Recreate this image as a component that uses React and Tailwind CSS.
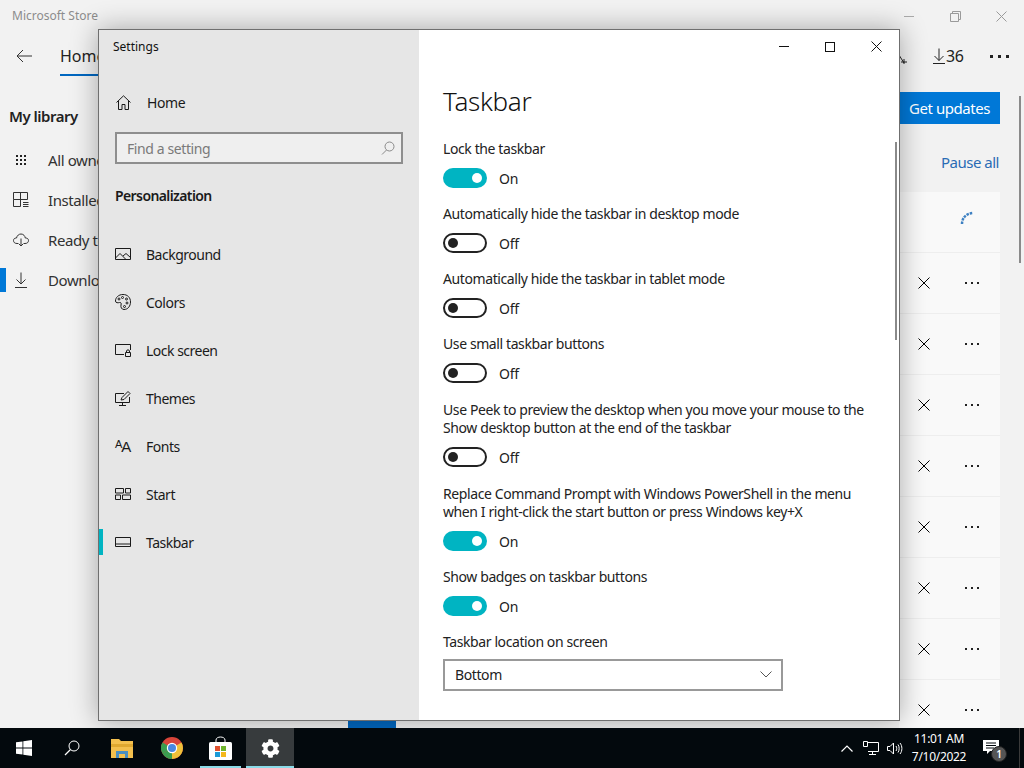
import React from "react";
import { FaCog } from "react-icons/fa";

const S = ({ w = 16, h = 16, vb, children, className = "" }) => (
  <svg
    width={w}
    height={h}
    viewBox={vb || `0 0 ${w} ${h}`}
    fill="none"
    stroke="currentColor"
    strokeWidth="1"
    className={`shrink-0 ${className}`}
  >
    {children}
  </svg>
);

const XIcon = ({ size = 12 }) => (
  <S w={size} h={size}>
    <path d={`M0.5 0.5L${size - 0.5} ${size - 0.5}M${size - 0.5} 0.5L0.5 ${size - 0.5}`} />
  </S>
);

const Dots = () => (
  <div className="flex gap-1">
    <span className="w-[2px] h-[2px] bg-[#222]"></span>
    <span className="w-[2px] h-[2px] bg-[#222]"></span>
    <span className="w-[2px] h-[2px] bg-[#222]"></span>
  </div>
);

const navIcons = {
  Background: (
    <S w={16} h={13}>
      <path d="M0.5 0.5H15.5V11.5H0.5ZM0.5 10L5 5.5L11 11.5M8 8L11 5.5L15.5 9.5" />
    </S>
  ),
  Colors: (
    <S w={16} h={16}>
      <path d="M8 0.5C3.5 0.5 0.5 3.5 0.5 7C0.5 9 3 9 4.5 8.5C6 8 6.5 9.5 6 11C5.5 13 6.5 15.5 9 15.5C13 15.5 15.5 12 15.5 8C15.5 3.5 12.5 0.5 8 0.5Z" />
      <circle cx="4" cy="5" r="1" />
      <circle cx="7.5" cy="3.5" r="1" />
      <circle cx="11.5" cy="5" r="1" />
      <circle cx="12" cy="9" r="1" />
      <circle cx="9.5" cy="12.5" r="1" />
    </S>
  ),
  "Lock screen": (
    <S w={16} h={13}>
      <path d="M9 10.5H0.5V0.5H15.5V6" />
      <path d="M10.5 8.5H15.5V12.5H10.5ZM11.5 8.5V7C11.5 5.5 14.5 5.5 14.5 7V8.5" />
    </S>
  ),
  Themes: (
    <S w={16} h={15}>
      <path d="M9 2.5H0.5V11.5H14.5V6M7.5 11.5V14M4 14.5H11" />
      <path d="M6 9L7 6.5L13 0.5L15 2.5L9 8.5Z" />
    </S>
  ),
  Fonts: (
    <span className="w-4 text-[15px] leading-none tracking-[-1px] font-['Liberation_Sans',sans-serif]">
      <span className="text-[11px] align-[4px]">A</span>A
    </span>
  ),
  Start: (
    <S w={16} h={12}>
      <path d="M0.5 0.5H8.5V5H0.5ZM10.5 0.5H15.5V5H10.5ZM0.5 7H5.5V11.5H0.5ZM7.5 7H15.5V11.5H7.5Z" />
    </S>
  ),
  Taskbar: (
    <S w={16} h={10}>
      <path d="M0.5 0.5H15.5V9.5H0.5ZM0.5 7H15.5" />
    </S>
  ),
};

const navItems = ["Background", "Colors", "Lock screen", "Themes", "Fonts", "Start", "Taskbar"];

const settings = [
  { label: ["Lock the taskbar"], on: true },
  { label: ["Automatically hide the taskbar in desktop mode"], on: false },
  { label: ["Automatically hide the taskbar in tablet mode"], on: false },
  { label: ["Use small taskbar buttons"], on: false },
  {
    label: [
      "Use Peek to preview the desktop when you move your mouse to the",
      "Show desktop button at the end of the taskbar",
    ],
    on: false,
    extra: true,
  },
  {
    label: [
      "Replace Command Prompt with Windows PowerShell in the menu",
      "when I right-click the start button or press Windows key+X",
    ],
    on: true,
    extra: true,
  },
  { label: ["Show badges on taskbar buttons"], on: true },
];

const Toggle = ({ on }) => (
  <div className="flex items-center mt-[10px] h-5">
    {on ? (
      <div className="w-11 h-5 rounded-full bg-[#00b4c2] flex items-center justify-end pr-[5px]">
        <span className="w-[10px] h-[10px] rounded-full bg-white"></span>
      </div>
    ) : (
      <div className="w-11 h-5 rounded-full border-2 border-[#222] flex items-center pl-[3px]">
        <span className="w-[10px] h-[10px] rounded-full bg-[#222]"></span>
      </div>
    )}
    <span className="ml-3 text-[14px] tracking-[-0.3px] text-[#222]">{on ? "On" : "Off"}</span>
  </div>
);

const SettingsWindow = () => (
  <div className="absolute left-[98px] top-[29px] w-[802px] h-[692px] border border-[#6f6f6f] flex shadow-[0_0_26px_rgba(0,0,0,0.32)] tracking-[-0.4px]">
    <div className="w-[320px] bg-[#e6e6e6] flex flex-col relative">
      <div className="pl-[14px] pt-[9px] text-[12px] leading-4 tracking-normal text-[#111]">Settings</div>
      <div className="flex items-center pl-[17px] mt-[37px] h-5 text-[#1a1a1a]">
        <S w={15} h={15}>
          <path d="M0.5 7.5L7.5 0.8L14.5 7.5M2.5 6V14.5H6V9.5H9V14.5H12.5V6" />
        </S>
        <span className="ml-4 text-[14px]">Home</span>
      </div>
      <div className="mx-4 mt-[20px] h-[32px] border-2 border-[#8e8e8e] bg-[#efefef] flex items-center justify-between pl-[10px] pr-[6px]">
        <span className="text-[14px] text-[#7a7a7a]">Find a setting</span>
        <S w={14} h={14} className="text-[#8a8a8a]">
          <circle cx="8.5" cy="5.5" r="4.5" />
          <path d="M5.5 9L1 13.5" />
        </S>
      </div>
      <div className="pl-4 mt-[21px] h-5 flex items-center text-[14px] tracking-[-0.6px] font-semibold text-[#1a1a1a]">
        Personalization
      </div>
      <div className="mt-[25px] flex flex-col">
        {navItems.map((item) => (
          <div key={item} className="h-12 flex items-center relative text-[#1a1a1a]">
            {item === "Taskbar" && (
              <span className="absolute left-0 top-[11px] w-1 h-[26px] bg-[#00b4c2]"></span>
            )}
            <div className="w-4 ml-4 flex justify-center">{navIcons[item]}</div>
            <span className="ml-[15px] text-[14px] tracking-[-0.5px]">{item}</span>
          </div>
        ))}
      </div>
    </div>

    <div className="flex-1 bg-white relative pl-6 overflow-hidden">
      <div className="absolute right-0 top-0 flex items-center h-[33px] text-[#111]">
        <div className="w-[46px] flex justify-center">
          <span className="w-[10px] h-px bg-[#111]"></span>
        </div>
        <div className="w-[46px] flex justify-center">
          <span className="w-[10px] h-[10px] border border-[#111]"></span>
        </div>
        <div className="w-[46px] flex justify-center">
          <XIcon size={11} />
        </div>
      </div>
      <div className="absolute right-[2px] top-[112px] w-[2px] h-[198px] bg-[#8a8a8a]"></div>

      <h1 className="mt-[51px] text-[26px] leading-[40px] font-light tracking-[-0.3px] text-[#111]">Taskbar</h1>
      <div className="mt-[19px] flex flex-col gap-[17px]">
        {settings.map((s) => (
          <div key={s.label[0]} className={s.extra ? "mt-px" : ""}>
            {s.label.map((l) => (
              <div key={l} className="text-[14px] leading-[18px] text-[#222]">
                {l}
              </div>
            ))}
            <Toggle on={s.on} />
          </div>
        ))}
        <div>
          <div className="text-[14px] leading-[18px] text-[#222]">Taskbar location on screen</div>
          <div className="mt-2 w-[340px] h-8 pb-px border-2 border-[#999] flex items-center justify-between pl-[10px] pr-[9px] text-[14px] text-[#222]">
            Bottom
            <S w={12} h={7} className="text-[#555]">
              <path d="M0.5 0.5L6 6L11.5 0.5" />
            </S>
          </div>
        </div>
      </div>
    </div>
  </div>
);

const storeItems = [
  {
    label: "All owned",
    icon: (
      <div className="grid grid-cols-3 gap-[2px]">
        {[...Array(9)].map((_, i) => (
          <span key={i} className="w-[2px] h-[2px] bg-[#222]"></span>
        ))}
      </div>
    ),
  },
  {
    label: "Installed",
    icon: (
      <S w={16} h={16}>
        <path d="M0.5 0.5H14.5V7.5H0.5ZM7.5 0.5V14.5H0.5V7.5M10 10.5H15.5M10 12.5H15.5M10 14.5H15.5" />
      </S>
    ),
  },
  {
    label: "Ready to",
    icon: (
      <S w={16} h={14}>
        <path d="M5 10.5H4C1.5 10.5 0.5 9 0.5 7.5C0.5 6 1.5 5 3.5 5C4 2.5 6 1 8 1C10.5 1 12 3 12.3 5C14.5 5 15.5 6 15.5 7.5C15.5 9 14.5 10.5 12 10.5H11M8 5.5V13M5.5 10.5L8 13L10.5 10.5" />
      </S>
    ),
  },
  {
    label: "Downloads",
    active: true,
    icon: (
      <S w={12} h={16}>
        <path d="M6 0.5V12M1.5 7.5L6 12L10.5 7.5M0 15.5H12" />
      </S>
    ),
  },
];

const StoreBack = () => (
  <div className="h-[728px] bg-[#f2f2f2] flex justify-between overflow-hidden">
    <div className="w-[200px] flex flex-col">
      <div className="pl-3 pt-2 h-[36px] text-[12px] leading-4 text-[#8c8c8c]">Microsoft Store</div>
      <div className="h-[40px] flex items-center pl-4">
        <S w={16} h={14} className="text-[#333]">
          <path d="M16 7H1M7 1L1 7L7 13" />
        </S>
        <div className="ml-7 relative h-[40px] flex items-center text-[16px] text-[#222]">
          Home
          <span className="absolute left-0 bottom-0 w-full h-[2px] bg-[#0067c0]"></span>
        </div>
      </div>
      <div className="pl-[9px] mt-[30px] text-[15px] leading-5 tracking-[-0.5px] font-semibold text-[#222]">My library</div>
      <div className="mt-[14px] flex flex-col">
        {storeItems.map((it) => (
          <div key={it.label} className="h-10 flex items-center relative text-[15px] tracking-[-0.4px] text-[#333]">
            {it.active && <span className="absolute left-0 top-2 w-[6px] h-6 bg-[#0078d7]"></span>}
            <div className="ml-[13px] w-4 flex justify-center">{it.icon}</div>
            <span className="ml-[19px]">{it.label}</span>
          </div>
        ))}
      </div>
    </div>

    <div className="w-[125px] flex flex-col relative">
      <div className="h-[36px] shrink-0 pb-1 flex items-center text-[#9a9a9a]">
        <span className="ml-[5px] w-[10px] h-px bg-[#aaa]"></span>
        <S w={11} h={11} className="ml-[36px]">
          <path d="M0.5 2.5H8.5V10.5H0.5ZM2.5 2.5V0.5H10.5V8.5H8.5" />
        </S>
        <div className="ml-[35px]">
          <XIcon size={11} />
        </div>
      </div>
      <div className="h-[40px] shrink-0 flex items-center text-[#222]">
        <S w={8} h={16}>
          <path d="M0 7L5 15M2 14H8M5 11V16" />
        </S>
        <S w={12} h={16} className="ml-[26px]">
          <path d="M6 0.5V12.5M1.5 8L6 12.5L10.5 8M0 15.5H12" />
        </S>
        <span className="ml-[1px] text-[16px] tracking-[-0.5px]">36</span>
        <div className="ml-[27px] flex gap-[5px]">
          <span className="w-[3px] h-[3px] bg-[#222]"></span>
          <span className="w-[3px] h-[3px] bg-[#222]"></span>
          <span className="w-[3px] h-[3px] bg-[#222]"></span>
        </div>
      </div>
      <div className="mt-4 w-[101px] h-8 shrink-0 bg-[#0078d7] flex items-center justify-center text-[15px] tracking-[-0.45px] text-white">
        Get updates
      </div>
      <div className="w-[100px] mt-[28px] shrink-0 text-right text-[15px] leading-5 tracking-[-0.5px] text-[#2a6cb5]">Pause all</div>
      <div className="w-[101px] mt-[20px] h-[60px] shrink-0 bg-[#f9f9f9] flex items-start justify-end pt-[19px] pr-[26px]">
        <S w={14} h={14} className="text-[#3d80c2]">
          <path d="M2 13C2 7 6 2.5 13 2" strokeWidth="2.5" strokeDasharray="2.5 1" />
        </S>
      </div>
      {[0, 1, 2, 3, 4, 5, 6, 7].map((i) => (
        <div
          key={i}
          className="w-[101px] h-[61px] shrink-0 bg-[#f9f9f9] border-t border-[#eeeeee] flex items-center justify-end pr-[21px] gap-[35px]"
        >
          <XIcon size={12} />
          <Dots />
        </div>
      ))}
      <div className="absolute right-[3px] top-[96px] w-[2px] h-[167px] bg-[#8a8a8a]"></div>
    </div>
  </div>
);

const Taskbar = () => (
  <div className="h-10 bg-[#03090d] flex items-center relative text-white">
    <div className="w-12 flex justify-center">
      <svg width="16" height="16" viewBox="0 0 16 16" fill="#fff">
        <path d="M0 2.3L6.5 1.4V7.6H0ZM7.3 1.3L16 0V7.6H7.3ZM0 8.4H6.5V14.6L0 13.7ZM7.3 8.4H16V16L7.3 14.7Z" />
      </svg>
    </div>
    <div className="w-12 flex justify-center">
      <S w={16} h={16} className="text-white">
        <circle cx="10" cy="6" r="5" />
        <path d="M6.5 9.5L1 15" strokeWidth="1.3" />
      </S>
    </div>
    <div className="w-[52px] flex justify-center">
      <svg width="22" height="19" viewBox="0 0 22 19">
        <path d="M0 0H8L10 2H22V19H0Z" fill="#f4c04e" />
        <path d="M0 5H22V8H0Z" fill="#e0a830" />
        <path d="M5 19V12H17V19Z" fill="#4a8fc2" />
        <path d="M8 19V15H14V19Z" fill="#f4c04e" />
      </svg>
    </div>
    <div className="w-12 flex justify-center">
      <svg width="22" height="22" viewBox="0 0 22 22">
        <circle cx="11" cy="11" r="11" fill="#d9453a" />
        <path d="M11 11L1.5 16.5A11 11 0 0 0 11 22Z" fill="#3a9d50" />
        <path d="M11 11L1.5 16.5A11 11 0 0 1 1.5 5.5Z" fill="#3a9d50" />
        <path d="M11 11L11 22A11 11 0 0 0 20.5 5.5Z" fill="#efc13a" />
        <circle cx="11" cy="11" r="5.2" fill="#fff" />
        <circle cx="11" cy="11" r="4" fill="#4a88e0" />
      </svg>
    </div>
    <div className="w-[50px] h-full flex items-center pl-[13px] relative">
      <svg width="23" height="24" viewBox="0 0 23 24">
        <path d="M7 7V4C7 0 16 0 16 4V7" fill="none" stroke="#fff" strokeWidth="1" />
        <rect x="0" y="6" width="23" height="18" rx="1.5" fill="#fff" />
        <rect x="6" y="10" width="5" height="5" fill="#e0512f" />
        <rect x="12" y="10" width="5" height="5" fill="#6fb52c" />
        <rect x="6" y="16" width="5" height="5" fill="#1d9bd8" />
        <rect x="12" y="16" width="5" height="5" fill="#f4b81c" />
      </svg>
      <span className="absolute left-[4px] w-[41px] bottom-0 h-[2px] bg-[#8adbe8]"></span>
    </div>
    <div className="w-[48px] h-full bg-[#373b3d] flex justify-center items-center relative">
      <FaCog size={19} color="#fff" />
      <span className="absolute left-0 right-0 bottom-0 h-[2px] bg-[#8adbe8]"></span>
    </div>

    <div className="ml-auto flex items-center">
      <S w={12} h={7} className="text-white">
        <path d="M0.5 6.5L6 1L11.5 6.5" strokeWidth="1.2" />
      </S>
      <S w={16} h={14} className="ml-[10px] text-white">
        <path d="M5 1.5H15.5V10.5H5M9.5 10.5V13M6 13.5H13M0.5 0.5H4.5V5.5H0.5Z" />
      </S>
      <S w={16} h={13} className="ml-2 text-white">
        <path d="M0.5 4.5H3L6.5 1V12L3 8.5H0.5ZM9 4C10 5.5 10 7.5 9 9M11 2.5C12.5 4.5 12.5 8.5 11 10.5M13 1C15.5 4 15.5 9 13 12" />
      </S>
      <div className="ml-[10px] w-[52px] flex flex-col items-center text-[12px] leading-[18px] tracking-[-0.3px]">
        <span>11:01 AM</span>
        <span>7/10/2022</span>
      </div>
      <div className="ml-[18px] relative w-4 h-4">
        <svg width="16" height="14" viewBox="0 0 16 14" fill="#fff">
          <path d="M0 0H16V11H7L4 14V11H0Z" />
          <path d="M3 3H13M3 5.5H13M3 8H11" stroke="#03090d" strokeWidth="1" />
        </svg>
        <span className="absolute left-[8px] top-[6px] w-4 h-4 rounded-full bg-[#555] border border-[#222] flex items-center justify-center text-[10px] leading-none font-semibold">
          1
        </span>
      </div>
      <span className="ml-5 mr-1 w-px h-10 bg-[#3a3a3a]"></span>
    </div>
  </div>
);

export default function App() {
  return (
    <div className="w-[1024px] h-[768px] relative overflow-hidden font-['Noto_Sans',sans-serif]">
      <StoreBack />
      <div className="absolute left-[348px] top-[720px] w-12 h-2 bg-[#0067c0]"></div>
      <SettingsWindow />
      <Taskbar />
    </div>
  );
}
